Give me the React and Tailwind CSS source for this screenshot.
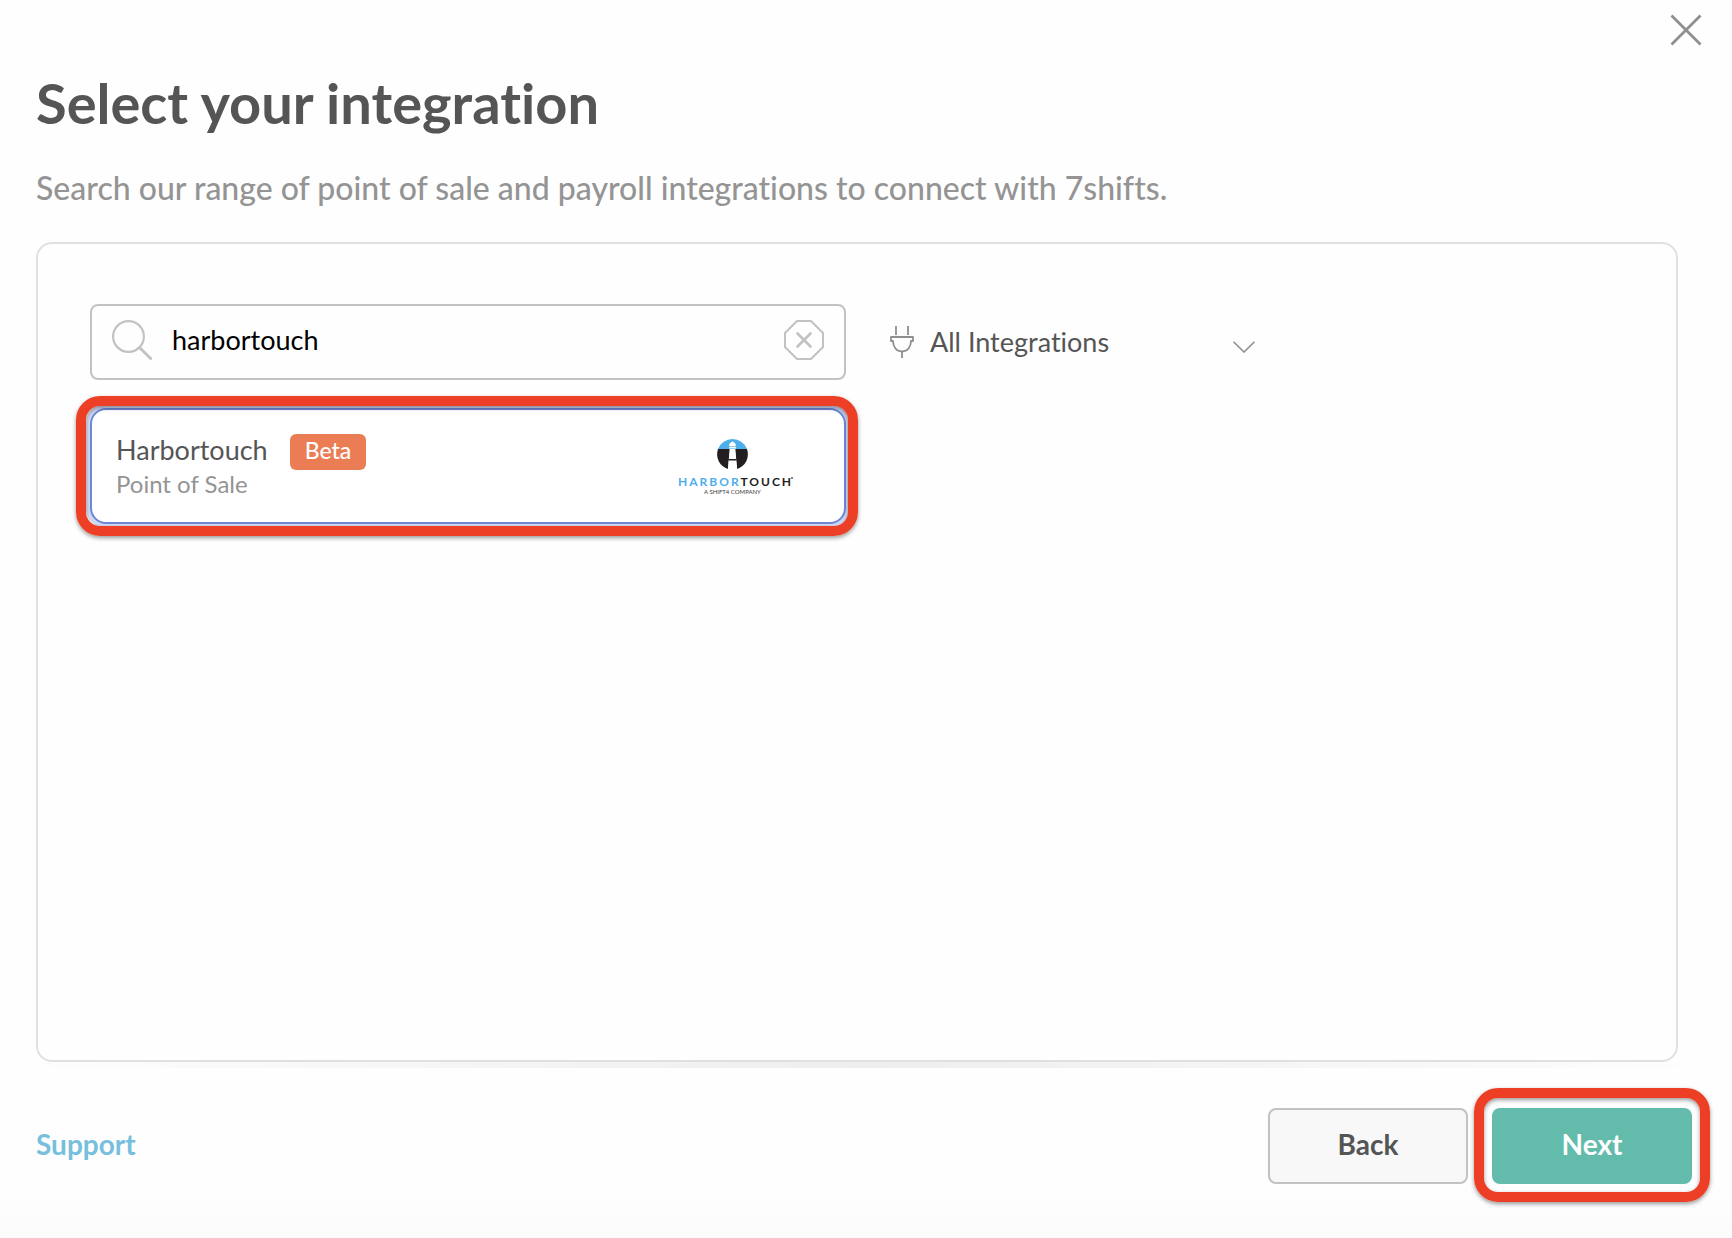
import { useState } from "react";

const integrations = [
  { id: "harbortouch", name: "Harbortouch", type: "Point of Sale", beta: true },
];

function CloseIcon() {
  return (
    <svg className="w-8 h-8" viewBox="0 0 32 32" fill="none" stroke="#8f8f8f" strokeWidth="2.8">
      <path d="M1.5 1.5 30.5 30.5M30.5 1.5 1.5 30.5" />
    </svg>
  );
}

function SearchIcon() {
  return (
    <svg className="w-10 h-10 shrink-0" viewBox="0 0 40 40" fill="none" stroke="#c2c2c2" strokeWidth="2.2">
      <circle cx="16.5" cy="16.5" r="15.4" />
      <path d="M28 28 38.6 38.6" strokeWidth="2.8" strokeLinecap="round" />
    </svg>
  );
}

function ClearIcon() {
  return (
    <svg className="w-10 h-10" viewBox="0 0 40 40" fill="none" stroke="#c2c2c2" strokeWidth="2" strokeLinejoin="round">
      <path d="M13 1H27L39 13V27L27 39H13L1 27V13Z" />
      <path d="M13.5 13.5 26.5 26.5M26.5 13.5 13.5 26.5" strokeWidth="2.6" strokeLinecap="round" />
    </svg>
  );
}

function PlugIcon() {
  return (
    <svg className="w-6 h-8 shrink-0" viewBox="0 0 24 32" fill="none" stroke="#8f8f8f" strokeWidth="1.8">
      <path d="M6 0V9M18 0V9M12 25.5V32" />
      <path d="M3 15H1V11H23V15H21C21 21 17.5 25.5 12 25.5S3 21 3 15Z" strokeLinejoin="round" />
    </svg>
  );
}

function ChevronIcon() {
  return (
    <svg className="w-6 h-3 shrink-0 mt-2.5" viewBox="0 0 24 12" fill="none" stroke="#8f8f8f" strokeWidth="1.6">
      <path d="M1.5 .7 12 11 22.5 .7" />
    </svg>
  );
}

function HarbortouchLogo() {
  return (
    <svg className="w-[118px] h-[60px]" viewBox="0 0 118 60" role="img" aria-label="Harbortouch, a Shift4 company">
      <path d="M40 13A15.5 15.5 0 0 1 69 13Z" fill="#4eaeea" />
      <path d="M40 13A15.5 15.5 0 0 0 50 33L52 13ZM69 13A15.5 15.5 0 0 1 59 33L57 13Z" fill="#231f20" />
      <path d="M51.7 10.5 51 8.500 52.500 6.800 54.500 5.200 56.500 6.800 58 8.500 57.300 10.500 58 12 57.300 13.500 59.200 34H49.800L51.700 13.500 51 12Z" fill="#fff" />
      <path d="M51.5 10.5H57.5M51.5 12.5H57.5" stroke="#4eaeea" strokeWidth=".6" />
      <path d="M50.5 23H58.5V24.5H50.5Z" fill="#231f20" />
      <text x="0" y="50" fontFamily="Lato, sans-serif" fontWeight="700" fontSize="12" letterSpacing="2" fill="#4eaeea">
        HARBOR<tspan fill="#231f20">TOUCH</tspan>
      </text>
      <circle cx="114" cy="42" r="1" fill="#555555" />
      <text x="26" y="58" fontFamily="Lato, sans-serif" fontSize="6" fill="#3c3c3c">A SHIFT4 COMPANY</text>
    </svg>
  );
}

// red marker drawn around the step the user should look at
function Highlight({ className }) {
  return (
    <span
      aria-hidden="true"
      className={`absolute pointer-events-none border-10 border-[#ec3f25] rounded-3xl shadow-[0_2px_4px_rgba(0,0,0,0.4),inset_0_2px_4px_rgba(0,0,0,0.4)] ${className}`}
    />
  );
}

function IntegrationCard({ name, type, beta }) {
  return (
    <div className="relative">
      <button
        type="button"
        className="w-full h-[116px] flex items-center justify-between pl-6 pr-12 text-left bg-white border-2 border-[#6d88d8] rounded-2xl ring-4 ring-[#d3daf3]"
      >
        <span className="flex flex-col">
          <span className="flex items-start gap-[22px]">
            <span className="text-[27px] leading-8 text-[#555555]">{name}</span>
            {beta && (
              <span className="h-9 px-[15px] rounded-md bg-[#eb7d55] text-white text-[23px] leading-8 font-medium">
                Beta
              </span>
            )}
          </span>
          <span className="text-2xl leading-7 text-[#949494]">{type}</span>
        </span>
        <HarbortouchLogo />
      </button>
      <Highlight className="-inset-3 -left-3.5" />
    </div>
  );
}

export default function App() {
  const [search, setSearch] = useState("harbortouch");
  const [filter, setFilter] = useState("all");

  const results = integrations.filter((item) => item.id.includes(search.toLowerCase()));

  return (
    <div className="min-h-screen flex flex-col bg-[#fefefe] font-[Lato,sans-serif] [font-variant-ligatures:none]">
      <header className="pl-9 pr-[30px] pt-3.5">
        <div className="flex justify-end">
          <button type="button" aria-label="Close">
            <CloseIcon />
          </button>
        </div>
        <h1 className="mt-6 text-[56px] leading-[66px] font-bold text-[#555555]">Select your integration</h1>
        <p className="mt-[34px] text-[32px] leading-9 font-medium text-[#949494]">
          Search our range of point of sale and payroll integrations to connect with 7shifts.
        </p>
      </header>

      <main className="flex-1 ml-9 mr-[54px] mt-9 pt-[60px] pl-13 pr-[30px] border-2 border-[#e0e0e0] rounded-2xl">
        <div className="grid grid-cols-2 gap-x-11 gap-y-7">
          <div className="h-[76px] flex items-center gap-5 px-5 pb-1 border-2 border-[#c2c2c2] rounded-lg">
            <SearchIcon />
            <input
              type="text"
              aria-label="Search integrations"
              value={search}
              onChange={(e) => setSearch(e.target.value)}
              className="flex-1 min-w-0 text-[27px] leading-9 text-black outline-none"
            />
            <button type="button" aria-label="Clear search" onClick={() => setSearch("")}>
              <ClearIcon />
            </button>
          </div>
          <label className="h-[76px] w-[366px] flex items-center gap-4">
            <PlugIcon />
            <select
              aria-label="Integration type"
              value={filter}
              onChange={(e) => setFilter(e.target.value)}
              className="flex-1 min-w-0 appearance-none bg-transparent text-[27px] leading-9 text-[#555555] outline-none"
            >
              <option value="all">All Integrations</option>
              <option value="pos">Point of Sale</option>
              <option value="payroll">Payroll</option>
            </select>
            <ChevronIcon />
          </label>
          {results.map((item) => (
            <IntegrationCard key={item.id} {...item} />
          ))}
        </div>
      </main>

      <footer className="bg-linear-to-b from-[#fefefe] from-75% to-[#fbfbfb]">
        <div className="h-1.5 bg-linear-to-r from-transparent via-[#eeeeee] to-transparent" />
        <div className="flex items-center pl-9 pr-10 pt-10 pb-[54px]">
          <a href="#support" className="mr-auto pb-1 text-[28px] leading-9 font-bold text-[#76bfdd]">
            Support
          </a>
          <button
            type="button"
            className="w-[200px] h-[76px] mr-6 pb-1 bg-[#f8f8f8] border-2 border-[#c2c2c2] rounded-lg text-[28px] leading-9 font-bold text-[#555555]"
          >
            Back
          </button>
          <div className="relative">
            <button
              type="button"
              className="w-[200px] h-[76px] pb-1 bg-[#63bbab] rounded-lg text-[28px] leading-9 font-bold text-white"
            >
              Next
            </button>
            <Highlight className="-inset-[18px] -top-5" />
          </div>
        </div>
      </footer>
    </div>
  );
}
